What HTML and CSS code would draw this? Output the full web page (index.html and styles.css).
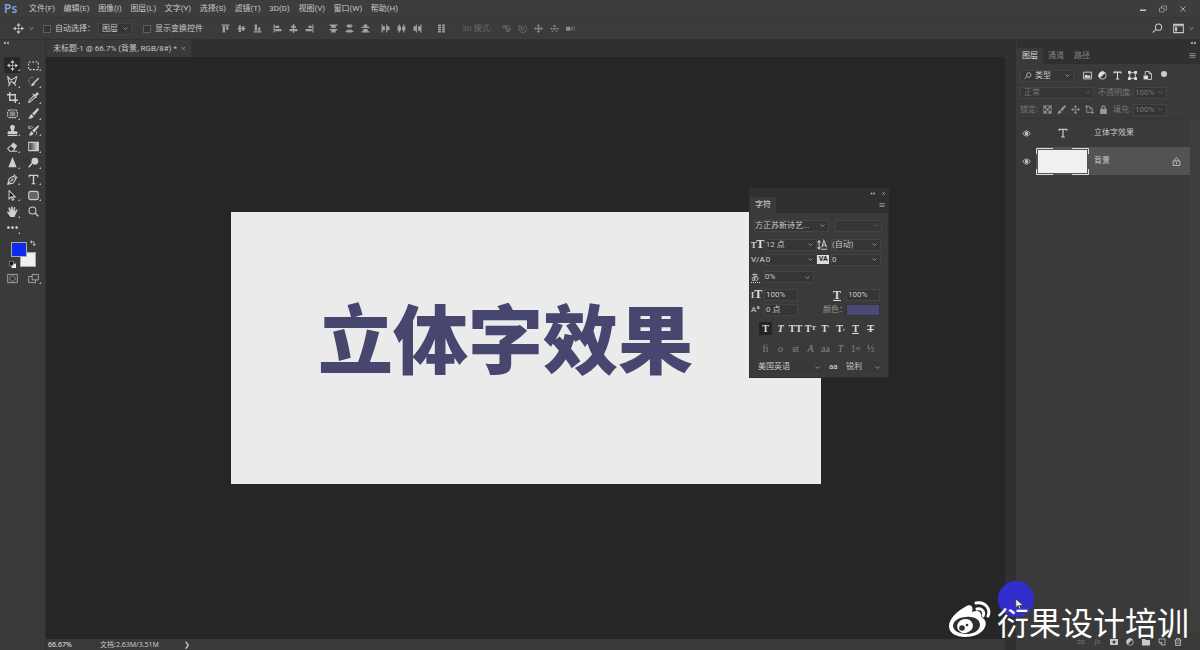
FILE: index.html
```html
<!DOCTYPE html>
<html lang="zh-CN">
<head>
<meta charset="utf-8">
<title>未标题-1</title>
<link rel="stylesheet" href="styles.css">
</head>
<body>
<svg class="defs" aria-hidden="true">
  <symbol id="move" viewBox="0 0 16 16"><path class="l" d="M8 2v12M2 8h12"/><path d="M8 0l3 4H5zM8 16l3-4H5zM0 8l4-3v6zM16 8l-4-3v6z"/></symbol>
  <symbol id="chev" viewBox="0 0 8 8"><path class="l" d="M1 2.500l3 3 3-3"/></symbol>
  <symbol id="a-top" viewBox="0 0 16 16"><path d="M1 1h14v2H1zM3 4h4v11H3zM9 4h4v6H9z"/></symbol>
  <symbol id="a-mid" viewBox="0 0 16 16"><path d="M3 2h4v12H3zM9 4h4v8H9zM1 7h14v2H1z"/></symbol>
  <symbol id="a-bot" viewBox="0 0 16 16"><path d="M1 13h14v2H1zM3 1h4v11H3zM9 6h4v6H9z"/></symbol>
  <symbol id="a-left" viewBox="0 0 16 16"><path d="M1 1h2v14H1zM4 3h7v4H4zM4 9h11v4H4z"/></symbol>
  <symbol id="a-cen" viewBox="0 0 16 16"><path d="M7 0h2v16H7zM4 3h8v4H4zM1 9h14v4H1z"/></symbol>
  <symbol id="a-right" viewBox="0 0 16 16"><path d="M13 1h2v14h-2zM6 3h6v4H6zM1 9h11v4H1z"/></symbol>
  <symbol id="d-top" viewBox="0 0 16 16"><path d="M1 1h14v2H1zM4 3h8v4H4zM1 9h14v2H1zM4 11h8v4H4z"/></symbol>
  <symbol id="d-mid" viewBox="0 0 16 16"><path d="M4 1h8v5H4zM1 3h14v1H1zM4 10h8v5H4zM1 12h14v2H1z"/></symbol>
  <symbol id="d-bot" viewBox="0 0 16 16"><path d="M5 1h6v4H5zM1 5h14v2H1zM4 9h8v4H4zM1 13h14v2H1z"/></symbol>
  <symbol id="d-left" viewBox="0 0 16 16"><path d="M1 1h2v14H1zM3 4h4v7H3zM9 1h2v14H9zM11 4h4v7h-4z"/></symbol>
  <symbol id="d-cen" viewBox="0 0 16 16"><path d="M3 1h2v14H3zM1 4h6v8H1zM11 1h2v14h-2zM9 5h6v6H9z"/></symbol>
  <symbol id="d-right" viewBox="0 0 16 16"><path d="M5 1h2v14H5zM1 4h4v8H1zM13 1h2v14h-2zM9 4h4v8H9z"/></symbol>
  <symbol id="auto" viewBox="0 0 16 16"><path d="M2 1h5v3H2zM9 1h5v3H9zM2 5h5v2H2zM9 5h5v2H9zM2 8h5v3H2zM9 8h5v3H9zM2 12h5v3H2zM9 12h5v3H9z"/></symbol>
  <symbol id="orbit" viewBox="0 0 16 16"><path class="l" d="M2 9C-1 5 4 1 9 4M3 3l8 9M14 7c4 5-3 9-8 5M9 3l5 3-3 5-5-3z"/></symbol>
  <symbol id="roll" viewBox="0 0 16 16"><circle class="l" cx="8" cy="8" r="3"/><path class="l" d="M3 4a7 7 0 1 0 9-2M1 2l2 3 3-2"/></symbol>
  <symbol id="pan" viewBox="0 0 16 16"><path class="l" d="M8 2v12M2 8h12"/><path d="M8 0l3 4H5zM8 16l3-4H5zM0 8l4-3v6zM16 8l-4-3v6zM6 6h4v4H6z"/></symbol>
  <symbol id="slide" viewBox="0 0 16 16"><path d="M8 1l3 4H5zM6 7h4v3H6zM0 8l4-2v4zM16 8l-4-2v4zM2 13l3-2 1 3zM14 13l-3-2-1 3z"/></symbol>
  <symbol id="cam" viewBox="0 0 16 16"><path d="M0 5h8v7H0zM9 8l3-3v7z"/><path class="l" d="M14 4q3 4 0 8"/></symbol>
  <symbol id="search" viewBox="0 0 16 16"><circle class="l w" cx="9.500" cy="6" r="4.500"/><path class="l w" d="M6 9l-5 5"/></symbol>
  <symbol id="space" viewBox="0 0 16 16"><path class="l w" d="M1 2h14v12H1zM1 4h14"/><path d="M3 6h3v6H3z"/></symbol>
  <symbol id="min" viewBox="0 0 16 16"><path d="M2 9h12v3H2z"/></symbol>
  <symbol id="restore" viewBox="0 0 16 16"><path class="l" d="M1 6h9v8H1zM5 6V2h10v8h-5"/></symbol>
  <symbol id="close" viewBox="0 0 16 16"><path class="l w" d="M3 3l10 10M13 3L3 13"/></symbol>
  <symbol id="dbl" viewBox="0 0 16 16"><path d="M1 8l6-4v8zM9 8l6-4v8z"/></symbol>
  <symbol id="menu" viewBox="0 0 16 16"><path d="M1 3h14v2H1zM1 7h14v2H1zM1 11h14v2H1z"/></symbol>
  <symbol id="marq" viewBox="0 0 16 16"><path class="l w" stroke-dasharray="3 2" d="M1 3h14v11H1z"/></symbol>
  <symbol id="lasso" viewBox="0 0 16 16"><path class="l w" d="M1 1l5 5 8-5-2 9-6-2-3 3zM5 11l-3 4M8 9l5 5"/></symbol>
  <symbol id="quick" viewBox="0 0 16 16"><path class="l" stroke-dasharray="2 2" d="M7 2C2 1 0 6 2 10s5 4 7 3"/><path d="M15 2l1 2-6 6-2-1zM8 9l2 2c-1 3-3 4-6 3 2-1 2-4 4-5z"/></symbol>
  <symbol id="crop" viewBox="0 0 16 16"><path class="l ww" d="M4 0v12h12M0 4h12v12"/></symbol>
  <symbol id="eyed" viewBox="0 0 16 16"><path d="M10 4l3-4 3 3-4 3 1 2-1 1-6-6 1-1z"/><path class="l w" d="M9 5l-7 7-1 3 3-1 7-7"/></symbol>
  <symbol id="patch" viewBox="0 0 16 16"><rect class="l w" stroke-dasharray="3 1" x="1" y="3" width="14" height="11" rx="3"/><path opacity=".5" d="M4 5h8v7H4z"/></symbol>
  <symbol id="brush" viewBox="0 0 16 16"><path d="M14 0l2 2-7 9-3-3zM5 9l3 3c-1 3-4 4-8 3 3-1 2-5 5-6z"/></symbol>
  <symbol id="stamp" viewBox="0 0 16 16"><path d="M6 7C3 3 5 0 8 0s5 3 2 7v2h4q2 1 1 4H1q-1-3 1-4h4zM1 14h14v2H1z"/></symbol>
  <symbol id="hist" viewBox="0 0 16 16"><path d="M15 0l1 2-7 9-3-3zM5 9l3 3c-1 3-4 4-7 3 2-1 2-5 4-6z"/><path class="l" d="M1 4q4-4 7 0M1 1v4h4M12 9q2 4-1 6"/></symbol>
  <symbol id="erase" viewBox="0 0 16 16"><path d="M9 2l6 5-4 5-6-5z"/><path class="l w" d="M5 7l-4 4 3 4h4l4-4M8 15h7"/></symbol>
  <symbol id="grad" viewBox="0 0 16 16"><linearGradient id="gg"><stop stop-color="#333"/><stop offset="1" stop-color="#ddd"/></linearGradient><path fill="url(#gg)" stroke="#ccc" stroke-width="1.500" d="M1 2h14v12H1z"/></symbol>
  <symbol id="tri" viewBox="0 0 16 16"><path d="M8 0l6 15H2z"/></symbol>
  <symbol id="dodge" viewBox="0 0 16 16"><circle cx="10" cy="6" r="5"/><path class="l ww" d="M6 9l-5 6"/></symbol>
  <symbol id="pen" viewBox="0 0 16 16"><path class="l w" d="M1 15l2-8 6-4 4 4-4 6zM2 14l6-6M10 1l5 5"/><circle cx="8" cy="8" r="1.500"/></symbol>
  <symbol id="type" viewBox="0 0 16 16"><path d="M1 1h14v4h-1l-1-2H9v10l2 1v1H5v-1l2-1V3H3L2 5H1z"/></symbol>
  <symbol id="arrow" viewBox="0 0 16 16"><path fill="#161616" stroke="#ccc" stroke-width="1.500" d="M3 1v12l3-3 2 5 2-1-2-4h4z"/></symbol>
  <symbol id="rect" viewBox="0 0 16 16"><rect x="1" y="2" width="14" height="12" rx="3" fill="#666" stroke="#ccc" stroke-width="1.500"/></symbol>
  <symbol id="hand" viewBox="0 0 16 16"><path d="M5 16L0 9c1-2 2-1 4 1L2 3c1-2 2-1 3 1l1 3V1c1-1 2-1 2 0l1 6 1-5c1-1 2 0 2 1l-1 5 3-3c1 0 2 1 1 2l-3 6-1 3z"/></symbol>
  <symbol id="zoom" viewBox="0 0 16 16"><circle class="l w" cx="6.500" cy="6.500" r="5"/><path class="l ww" d="M10 10l5 5"/></symbol>
  <symbol id="dots" viewBox="0 0 16 16"><circle cx="2" cy="8" r="2"/><circle cx="8" cy="8" r="2"/><circle cx="14" cy="8" r="2"/></symbol>
  <symbol id="swap" viewBox="0 0 16 16"><path class="l ww" d="M3 5h8v8"/><path d="M0 5l5-5v10zM11 16l-5-5h10z"/></symbol>
  <symbol id="reset" viewBox="0 0 16 16"><path fill="#eee" d="M6 6h10v10H6z"/><path fill="#111" stroke="#ccc" d="M1 1h9v9H1z"/></symbol>
  <symbol id="mask" viewBox="0 0 16 16"><path class="l" d="M1 2h14v12H1z"/><circle class="l" stroke-dasharray="2 1" cx="8" cy="8" r="4"/></symbol>
  <symbol id="screen" viewBox="0 0 16 16"><path class="l" d="M6 2h9v8H6zM6 5H1v9h10v-4"/></symbol>
  <symbol id="img" viewBox="0 0 16 16"><path class="l w" d="M1 2h14v12H1z"/><path d="M3 12V8l3-2 3 3 2-2 2 2v3z"/></symbol>
  <symbol id="adj" viewBox="0 0 16 16"><circle class="l w" cx="8" cy="8" r="6.500"/><path d="M3 13A7 7 0 0 1 13 3z"/></symbol>
  <symbol id="shape" viewBox="0 0 16 16"><path class="l w" d="M3 3h10v10H3z"/><path d="M0 0h5v5H0zM11 0h5v5h-5zM0 11h5v5H0zM11 11h5v5h-5z"/></symbol>
  <symbol id="smart" viewBox="0 0 16 16"><path class="l w" d="M4 7V1h7l4 4v10H9M11 1v4h4"/><path d="M1 8h8v7H1z"/></symbol>
  <symbol id="check" viewBox="0 0 16 16"><path class="l" d="M1 1h14v14H1z"/><path d="M2 2h4v4H2zM10 2h4v4h-4zM6 6h4v4H6zM2 10h4v4H2zM10 10h4v4h-4z"/></symbol>
  <symbol id="board" viewBox="0 0 16 16"><path class="l w" d="M3 0v13h13M0 3h9l4 4v9M9 3v4h4"/></symbol>
  <symbol id="lock" viewBox="0 0 16 16"><path d="M2 7h12v9H2z"/><path class="l ww" d="M5 8V4q3-5 6 0v4"/></symbol>
  <symbol id="lock2" viewBox="0 0 16 16"><path class="l w" d="M2 7h12v8H2zM5 7V4q3-5 6 0v3M8 9v4"/></symbol>
  <symbol id="eye" viewBox="0 0 16 16"><path class="l w" d="M1 8q7-9 14 0-7 9-14 0z"/><circle cx="8" cy="8" r="3"/></symbol>
  <symbol id="corners" viewBox="0 0 53 27"><path class="l" d="M.5 6V.5H17M36 .5h16.500V6M52.500 21v5.500H36M17 26.500H.5V21"/></symbol>
  <symbol id="link" viewBox="0 0 16 16"><path class="l w" d="M7 5q-6-2-6 3t6 3M9 5q6-2 6 3t-6 3M5 8h6"/></symbol>
  <symbol id="lmask" viewBox="0 0 16 16"><path fill-rule="evenodd" d="M0 2h16v12H0zM8 5a3 3 0 1 0 .1 0z"/></symbol>
  <symbol id="folder" viewBox="0 0 16 16"><path d="M0 2h6l2 2h8v11H0z"/></symbol>
  <symbol id="new" viewBox="0 0 16 16"><path class="l w" d="M2 9V2h12v12H8M2 9h6v5z"/></symbol>
  <symbol id="trash" viewBox="0 0 16 16"><path class="l w" d="M1 4h14M5 4V1h6v3M3 4v11h10V4M6 7v6M10 7v6"/></symbol>
  <symbol id="lead" viewBox="0 0 16 16"><path class="l w" d="M3 4v9M6 15h9"/><path d="M3 1l3 4H0zM3 16l3-4H0z"/><path class="l w" d="M7 12l3-10 4 10M8 9h5"/></symbol>
</svg>

<div class="app">
  <header>
    <nav class="menubar">
      <span class="logo">Ps</span>
      <div class="menus"><button>文件(F)</button><button>编辑(E)</button><button>图像(I)</button><button>图层(L)</button><button>文字(Y)</button><button>选择(S)</button><button>滤镜(T)</button><button>3D(D)</button><button>视图(V)</button><button>窗口(W)</button><button>帮助(H)</button></div>
      <div class="winctl"><button aria-label="最小化"><svg><use href="#min"/></svg></button><button aria-label="还原"><svg><use href="#restore"/></svg></button><button aria-label="关闭"><svg><use href="#close"/></svg></button></div>
    </nav>
    <div class="options">
      <div class="current"><svg class="i11"><use href="#move"/></svg><svg class="i5"><use href="#chev"/></svg></div>
      <label class="tick"><input type="checkbox">自动选择：</label>
      <span class="sel auto"><select aria-label="自动选择"><option>图层</option></select><svg><use href="#chev"/></svg></span>
      <label class="tick"><input type="checkbox">显示变换控件</label>
      <div class="aligns">
        <div class="group"><button aria-label="顶对齐"><svg><use href="#a-top"/></svg></button><button aria-label="垂直居中"><svg><use href="#a-mid"/></svg></button><button aria-label="底对齐"><svg><use href="#a-bot"/></svg></button></div>
        <div class="group near"><button aria-label="左对齐"><svg><use href="#a-left"/></svg></button><button aria-label="水平居中"><svg><use href="#a-cen"/></svg></button><button aria-label="右对齐"><svg><use href="#a-right"/></svg></button></div>
        <div class="group"><button aria-label="按顶分布"><svg><use href="#d-top"/></svg></button><button aria-label="垂直分布"><svg><use href="#d-mid"/></svg></button><button aria-label="按底分布"><svg><use href="#d-bot"/></svg></button></div>
        <div class="group near"><button aria-label="按左分布"><svg><use href="#d-left"/></svg></button><button aria-label="水平分布"><svg><use href="#d-cen"/></svg></button><button aria-label="按右分布"><svg><use href="#d-right"/></svg></button></div>
        <div class="group"><button aria-label="自动对齐"><svg><use href="#auto"/></svg></button></div>
      </div>
      <span class="mode">3D 模式:</span>
      <div class="group dim"><button aria-label="环绕"><svg><use href="#orbit"/></svg></button><button aria-label="滚动"><svg><use href="#roll"/></svg></button><button aria-label="平移"><svg><use href="#pan"/></svg></button><button aria-label="滑动"><svg><use href="#slide"/></svg></button><button aria-label="缩放相机"><svg><use href="#cam"/></svg></button></div>
      <div class="workspace"><button aria-label="搜索"><svg class="i11"><use href="#search"/></svg></button><button aria-label="工作区"><svg class="i11"><use href="#space"/></svg></button><svg class="i5"><use href="#chev"/></svg></div>
    </div>
  </header>

  <main>
    <aside class="toolbar">
      <svg class="grip"><use href="#dbl"/></svg>
      <div class="tools">
        <button class="on" aria-label="移动"><svg><use href="#move"/></svg></button><button aria-label="选框"><svg><use href="#marq"/></svg></button>
        <button aria-label="套索"><svg><use href="#lasso"/></svg></button><button aria-label="快速选择"><svg><use href="#quick"/></svg></button>
        <button aria-label="裁剪"><svg><use href="#crop"/></svg></button><button aria-label="吸管"><svg><use href="#eyed"/></svg></button>
        <button aria-label="修补"><svg><use href="#patch"/></svg></button><button aria-label="画笔"><svg><use href="#brush"/></svg></button>
        <button aria-label="图章"><svg><use href="#stamp"/></svg></button><button aria-label="历史画笔"><svg><use href="#hist"/></svg></button>
        <button aria-label="橡皮擦"><svg><use href="#erase"/></svg></button><button aria-label="渐变"><svg><use href="#grad"/></svg></button>
        <button aria-label="锐化"><svg><use href="#tri"/></svg></button><button aria-label="减淡"><svg><use href="#dodge"/></svg></button>
        <button aria-label="钢笔"><svg><use href="#pen"/></svg></button><button aria-label="文字"><svg><use href="#type"/></svg></button>
        <button aria-label="路径选择"><svg><use href="#arrow"/></svg></button><button aria-label="矩形"><svg><use href="#rect"/></svg></button>
        <button aria-label="抓手"><svg><use href="#hand"/></svg></button><button class="solo" aria-label="缩放"><svg><use href="#zoom"/></svg></button>
        <button aria-label="更多"><svg><use href="#dots"/></svg></button>
      </div>
      <div class="swatches">
        <button class="bg" aria-label="背景色"></button><button class="fg" aria-label="前景色"></button>
        <svg class="swap"><use href="#swap"/></svg><svg class="reset"><use href="#reset"/></svg>
      </div>
      <div class="modes"><button class="solo" aria-label="快速蒙版"><svg><use href="#mask"/></svg></button><button aria-label="屏幕模式"><svg><use href="#screen"/></svg></button></div>
    </aside>

    <section class="work">
      <div class="doctabs"><button class="doctab">未标题-1 @ 66.7% (背景, RGB/8#) * <svg><use href="#close"/></svg></button></div>
      <div class="pasteboard"><div class="artboard"><h1>立体字效果</h1></div></div>
      <footer class="status"><span class="pct">66.67%</span><span class="doc">文档:2.63M/3.51M</span><span>❯</span></footer>
    </section>

    <aside class="dock">
      <div class="dockgrip"><svg><use href="#dbl"/></svg></div>
      <div class="tabs"><button class="active">图层</button><button>通道</button><button>路径</button><svg><use href="#menu"/></svg></div>
      <div class="filters">
        <div class="frow">
          <span class="sel kind"><svg class="lens"><use href="#search"/></svg><select aria-label="类型"><option>类型</option></select><svg><use href="#chev"/></svg></span>
          <div class="ficons"><svg><use href="#img"/></svg><svg><use href="#adj"/></svg><svg><use href="#type"/></svg><svg><use href="#shape"/></svg><svg><use href="#smart"/></svg></div><i class="switch"></i>
        </div>
        <div class="frow faint">
          <span class="sel blend"><select aria-label="混合模式" disabled><option>正常</option></select><svg><use href="#chev"/></svg></span>
          <label class="lab" for="op">不透明度:</label><span class="sel pc"><input id="op" value="100%" disabled><svg><use href="#chev"/></svg></span>
        </div>
        <div class="frow faint">
          <span class="lab lk">锁定:</span>
          <div class="licons"><svg><use href="#check"/></svg><svg><use href="#brush"/></svg><svg><use href="#move"/></svg><svg><use href="#board"/></svg><svg><use href="#lock"/></svg></div>
          <label class="lab fill" for="fi">填充:</label><span class="sel pc"><input id="fi" value="100%" disabled><svg><use href="#chev"/></svg></span>
        </div>
      </div>
      <div class="layers">
        <div class="layer"><svg class="eye"><use href="#eye"/></svg><div class="body"><span class="thumb"><svg><use href="#type"/></svg></span><span>立体字效果</span></div></div>
        <div class="layer picked"><svg class="eye"><use href="#eye"/></svg><div class="body"><span class="thumb white"><svg><use href="#corners"/></svg></span><span>背景</span><svg class="lk2"><use href="#lock2"/></svg></div></div>
      </div>
      <div class="dockfoot"><svg class="off"><use href="#link"/></svg><span class="off">fx</span><svg><use href="#lmask"/></svg><svg><use href="#adj"/></svg><svg><use href="#folder"/></svg><svg><use href="#new"/></svg><svg><use href="#trash"/></svg></div>
    </aside>
  </main>

  <section class="char">
    <div class="chartop"><svg><use href="#dbl"/></svg><svg><use href="#close"/></svg></div>
    <div class="charhead"><span>字符</span><svg><use href="#menu"/></svg></div>
    <div class="charbody">
      <div class="crow font"><span class="sel"><select aria-label="字体"><option>方正苏新诗艺...</option></select><svg><use href="#chev"/></svg></span><span class="sel faint"><select aria-label="字体样式" disabled><option></option></select><svg><use href="#chev"/></svg></span></div>
      <div class="crow two"><b><small>T</small>T</b><span class="sel"><select aria-label="字号"><option>12 点</option></select><svg><use href="#chev"/></svg></span><svg class="i11"><use href="#lead"/></svg><span class="sel"><select aria-label="行距"><option>(自动)</option></select><svg><use href="#chev"/></svg></span></div>
      <div class="crow two"><b class="va">V/A</b><span class="sel"><select aria-label="字偶间距"><option>0</option></select><svg><use href="#chev"/></svg></span><b class="inv">VA</b><span class="sel"><select aria-label="字距"><option>0</option></select><svg><use href="#chev"/></svg></span></div>
      <div class="crow prop"><b class="cj">あ</b><span class="sel"><select aria-label="比例间距"><option>0%</option></select><svg><use href="#chev"/></svg></span></div>
      <div class="crow scale"><b><small>I</small>T</b><input aria-label="垂直缩放" value="100%"><b class="ul">T</b><input aria-label="水平缩放" value="100%"></div>
      <div class="crow base"><b class="va">Aª</b><input aria-label="基线偏移" value="0 点"><span class="clab">颜色：</span><button class="color" aria-label="颜色"></button></div>
      <div class="styles"><button class="on">T</button><button><i>T</i></button><button>TT</button><button>T<small>T</small></button><button>T<sup>'</sup></button><button>T<sub>,</sub></button><button><u>T</u></button><button><s>T</s></button></div>
      <div class="styles lig"><button>fi</button><button><i>o</i></button><button>st</button><button><i>A</i></button><button>aa</button><button><i>T</i></button><button>1<sup>st</sup></button><button>½</button></div>
      <div class="crow lang"><span class="sel bare"><select aria-label="语言"><option>美国英语</option></select><svg><use href="#chev"/></svg></span><b class="aa">aa</b><span class="sel bare"><select aria-label="消除锯齿"><option>锐利</option></select><svg><use href="#chev"/></svg></span></div>
    </div>
  </section>

  <div class="spot"><svg viewBox="0 0 12 16"><path d="M1 1v12l3-3 2 5 2-1-2-4h5z"/></svg></div>
  <div class="brand">
    <svg viewBox="0 0 44 38"><path d="M17 7c5-4 9-1 7 5 5-2 10-1 9 5 4 2 6 5 4 10-3 7-12 10-20 10C8 37 1 33 1 26 1 19 9 11 17 7z"/><path fill="#303030" d="M18 17c9-1 14 3 14 8s-6 9-13 9-14-3-14-8 6-9 13-9z"/><ellipse cx="17" cy="26" rx="8" ry="7" transform="rotate(-15 17 26)"/><circle fill="#303030" cx="14" cy="28" r="2.800"/><circle fill="#303030" cx="19" cy="25" r="1.300"/><path class="wave" d="M28 3c9-2 15 6 12 13M29 9c5-1 8 3 6 7"/></svg>
    <span>衍果设计培训</span>
  </div>
</div>
</body>
</html>
```
FILE: styles.css
```css
* { box-sizing: border-box; }
body { margin: 0; background: #303030; color: #c8c8c8; font: 8px/12px Roboto, "Noto Sans CJK SC", sans-serif; }
button, select, input { margin: 0; padding: 0; border: 0; background: none; color: inherit; font: inherit; border-radius: 0; appearance: none; }
button { display: flex; align-items: center; justify-content: center; white-space: nowrap; }
select:disabled, input:disabled { opacity: 1; color: inherit; }
svg { display: block; flex: none; width: 9px; height: 9px; fill: currentColor; overflow: visible; }
.defs { position: absolute; width: 0; height: 0; }
.l { fill: none; stroke: currentColor; stroke-width: 1; }
.w { stroke-width: 1.5; }
.ww { stroke-width: 2; }
.i11 { width: 11px; height: 11px; }
.i5 { width: 5px; height: 5px; }

.app { position: relative; display: flex; flex-direction: column; height: 100vh; overflow: hidden; }
.menubar { display: flex; align-items: center; height: 17px; padding: 0 13px 0 4px; background: #3d3d3d; }
.logo { width: 25px; color: #77a6df; font: 600 12px/16px "Noto Sans", sans-serif; }
.menus { display: flex; justify-content: space-between; width: 369px; }
.winctl { display: flex; gap: 12px; margin-left: auto; }
.winctl svg { width: 8px; height: 8px; }

.options { display: flex; align-items: center; height: 23px; padding: 0 6px 0 13px; background: #3b3b3b; border-top: 1px solid #353535; border-bottom: 1px solid #303030; }
.current { display: flex; align-items: center; gap: 5px; width: 30px; }
.tick { display: flex; align-items: center; gap: 4px; white-space: nowrap; }
.tick input { width: 8px; height: 8px; border: 1px solid #5c5c5c; background: #333; }
.sel { position: relative; display: flex; align-items: center; min-width: 0; height: 12px; background: #353535; border: 1px solid #444; }
.sel select, .sel input { width: 100%; min-width: 0; padding-left: 3px; line-height: 10px; }
.sel > svg:last-child { position: absolute; right: 3px; width: 5px; height: 5px; }
.auto { width: 34px; margin: 0 11px 0 3px; }
.aligns { display: flex; gap: 15px; margin: 0 16px 0 18px; color: #a2a2a2; }
.group { display: flex; gap: 7px; }
.near { margin-left: -4px; }
.mode { width: 40px; color: #686868; }
.dim { color: #8b8b8b; }
.workspace { display: flex; align-items: center; gap: 10px; margin-left: auto; }
.workspace > svg { margin-left: -5px; }

main { display: flex; flex: 1; min-height: 0; }
.toolbar { display: flex; flex-direction: column; width: 46px; background: #3a3a3a; border-right: 1px solid #303030; }
.grip { width: 6px; height: 6px; margin: 0 0 11px 3px; }
.tools, .modes { display: grid; grid-template-columns: 16px 16px; gap: 0 5px; padding-left: 4px; }
.tools { height: 179px; grid-auto-rows: 1fr; }
.tools button, .modes button { position: relative; color: #cfcfcf; }
.tools svg, .modes svg { width: 11px; height: 11px; }
.tools button::after, .modes button::after { content: ""; position: absolute; right: 0; bottom: 2px; border: 1px solid; border-color: transparent #bbb #bbb transparent; }
.tools .solo::after, .modes .solo::after { display: none; }
.tools .on { background: #282828; }
.swatches { position: relative; height: 32px; margin: 1px 0; }
.swatches button { position: absolute; width: 16px; height: 15px; border: 1px solid #aaa; }
.swatches .fg { left: 11px; top: 5px; background: #1029ef; }
.swatches .bg { left: 20px; top: 15px; background: #f0f0f0; }
.swap { position: absolute; left: 30px; top: 3px; width: 6px; height: 6px; }
.reset { position: absolute; left: 9px; top: 24px; width: 7px; height: 7px; }
.modes button { height: 16px; }

.work { display: flex; flex: 1; flex-direction: column; min-width: 0; }
.doctabs { display: flex; height: 17px; background: #303030; }
.doctab { gap: 4px; padding: 0 5px 0 7px; background: #393939; }
.doctab svg { width: 5px; height: 5px; }
.pasteboard { display: flex; flex: 1; align-items: center; justify-content: center; background: #262626; }
.artboard { display: flex; align-items: center; justify-content: center; width: 590px; height: 272px; padding: 0 40px 24px 0; background: #ebebeb; }
h1 { margin: 0; color: #46466e; font: 900 75px/100px "Noto Sans CJK SC", sans-serif; white-space: nowrap; }
.status { display: flex; align-items: center; height: 11px; padding-left: 2px; background: #393939; font: 7px/10px "Noto Sans", "Noto Sans CJK SC", sans-serif; }
.pct { width: 52px; color: #e0e0e0; }
.doc { width: 84px; }

.dock { display: flex; flex-direction: column; width: 195px; padding-left: 12px; background: linear-gradient(90deg, #303030 11px, #3a3a3a 11px); }
.dockgrip { display: flex; justify-content: flex-end; height: 8px; padding-right: 4px; background: #303030; }
.dockgrip svg { width: 6px; height: 6px; }
.tabs { display: flex; height: 16px; background: #303030; color: #828282; }
.tabs button { width: 26px; }
.tabs .active { background: #3a3a3a; color: #ddd; }
.tabs svg { width: 7px; height: 7px; margin: 4px 4px 0 auto; color: #888; }
.filters { padding: 3px 0 0 3px; }
.frow { display: flex; align-items: center; height: 17px; }
.faint { color: #777; }
.kind { width: 54px; padding-left: 3px; }
.kind .lens { width: 8px; height: 8px; }
.ficons { display: flex; gap: 6px; margin-left: 9px; color: #ddd; }
.licons { display: flex; gap: 5px; color: #999; }
.switch { width: 6px; height: 6px; margin: -4px 0 0 9px; border-radius: 3px; background: #ccc; }
.blend { width: 74px; margin-right: 4px; }
.lab { width: 35px; white-space: nowrap; }
.lk { width: 23px; }
.licons + .fill { width: 20px; margin-left: 5px; }
.faint .pc { width: 34px; }
.faint .pc input { padding-left: 1px; }
.layers { flex: 1; border-right: 10px solid #3e3e3e; border-top: 1px solid #343434; }
.layer { display: flex; align-items: center; height: 28px; }
.eye { width: 9px; height: 9px; margin: 0 5px; }
.body { display: flex; flex: 1; align-items: center; gap: 5px; height: 28px; }
.picked .body { background: #535353; }
.thumb { display: flex; align-items: center; justify-content: center; width: 53px; height: 27px; }
.thumb svg { width: 10px; height: 10px; }
.thumb.white { padding: 2px; background: #f0f0f0 content-box; color: #ddd; }
.thumb.white svg { width: 53px; height: 27px; }
.lk2 { margin: 0 9px 0 auto; }
.dockfoot { display: flex; align-items: center; justify-content: flex-end; gap: 8px; height: 17px; padding-right: 18px; }
.dockfoot svg { width: 8px; height: 8px; }
.dockfoot span { width: 9px; font: italic 8px/8px "Liberation Serif", serif; text-align: center; }
.off { color: #777; }

.char { position: absolute; left: 749px; top: 188px; width: 140px; height: 190px; background: #3a3a3a; border: 1px solid #303030; }
.chartop { display: flex; align-items: center; justify-content: flex-end; gap: 6px; height: 8px; padding-right: 2px; background: #303030; }
.chartop svg { width: 5px; height: 5px; }
.charhead { display: flex; justify-content: space-between; height: 16px; padding: 0 3px 0 0; background: #303030; }
.charhead span { width: 26px; line-height: 16px; text-align: center; background: #3a3a3a; color: #ddd; }
.charhead svg { width: 6px; height: 6px; margin-top: 5px; color: #999; }
.charbody { padding-top: 5px; }
.crow { display: grid; align-items: center; height: 15px; padding-right: 7px; }
.crow b { font: 700 12px/12px "Liberation Serif", serif; color: #ddd; }
.crow b small { font-size: 8px; }
.crow input { height: 12px; padding-left: 1px; background: #353535; border: 1px solid #444; min-width: 0; }
.crow .sel select { padding-left: 0; }
.font { grid-template-columns: 75px 47px; gap: 6px; padding-left: 4px; margin-bottom: 4px; }
.two { grid-template-columns: 13px 52px 13px 50px; justify-content: space-between; padding-left: 1px; }
.crow .va { font: 8px/10px Roboto, sans-serif; }
.crow .inv { width: 12px; background: #ddd; color: #222; font: 700 7px/9px Roboto, sans-serif; text-align: center; }
.prop { grid-template-columns: 13px 50px; padding-left: 1px; height: 20px; }
.crow .cj { font: 8px/10px "Noto Sans CJK SC", sans-serif; border-bottom: 1px dotted; width: 9px; }
.scale { grid-template-columns: 13px 34px 35px 13px 34px; padding-left: 1px; }
.scale .ul { grid-column: 4; text-decoration: underline; }
.base { grid-template-columns: 13px 34px 48px 34px; padding-left: 1px; }
.clab { padding-left: 25px; white-space: nowrap; color: #999; }
.color { height: 12px; background: #494a75; border: 1px solid #333; }
.styles { display: grid; grid-template-columns: repeat(8, 15px); height: 20px; padding-left: 8px; align-items: center; margin-top: 1px; }
.styles button { height: 13px; font: 700 10px/11px "Liberation Serif", serif; color: #ddd; }
.styles small, .styles sup, .styles sub { font-size: 7px; line-height: 6px; }
.styles .on { width: 13px; justify-self: center; background: #242424; }
.styles.lig { margin-top: 0; }
.styles.lig button { color: #858585; font-weight: 400; }
.lang { grid-template-columns: 68px 16px 40px; gap: 2px; padding-left: 6px; height: 18px; }
.sel.bare { border-color: #3a3a3a; background: #383838; }
.crow.lang .sel select { padding-left: 1px; }
.lang .aa { font: 8px/10px Roboto, sans-serif; padding-left: 3px; }

.spot { position: absolute; right: 166px; bottom: 33px; width: 36px; height: 36px; border-radius: 18px; background: #302fce; }
.spot svg { width: 9px; height: 12px; margin: 17px 0 0 17px; fill: #eee; stroke: #333; }
.brand { position: absolute; right: 11px; bottom: 9px; display: flex; align-items: center; gap: 5px; color: #fff; font: 32px/40px "Noto Sans CJK SC", sans-serif; white-space: nowrap; }
.brand svg { width: 44px; height: 38px; margin-bottom: 3px; }
.brand .wave { fill: none; stroke: #fff; stroke-width: 3; stroke-linecap: round; }
```
